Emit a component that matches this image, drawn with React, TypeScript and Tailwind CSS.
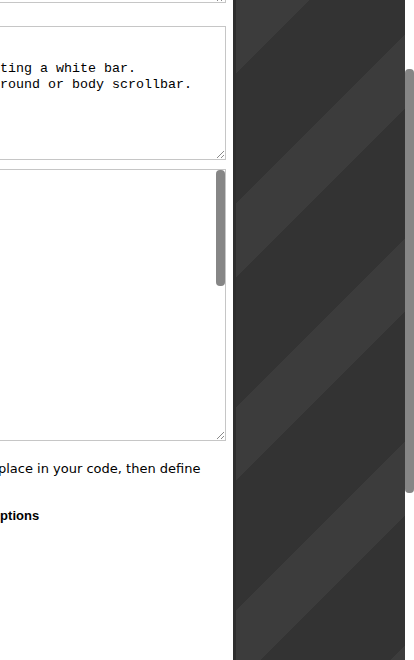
import React from 'react';

function ResizeGrip() {
  return (
    <svg width="8" height="8" viewBox="0 0 8 8" className="block">
      <path d="M1 8 L8 1" stroke="#8a8a8a" strokeWidth="1" />
      <path d="M5 8 L8 5" stroke="#8a8a8a" strokeWidth="1" />
    </svg>
  );
}

const codeLines = [
  '/* Why?',
  '',
  'body from creating a white bar.',
  'the html background or body scrollbar.',
];

export default function App() {
  return (
    <div className="flex w-[414px] h-[660px] overflow-hidden bg-white">
      {/* left column, scrolled sideways */}
      <div className="w-[233px] shrink-0 overflow-hidden text-black">
        <div className="-ml-[115px] w-[341px] -mt-[40px]">
          {/* textarea 1 (mostly scrolled out) */}
          <div className="h-[43px] border border-[#c6c6c6] flex items-end justify-end pr-[1px] pb-[1px]">
            <ResizeGrip />
          </div>

          {/* textarea 2 */}
          <div className="mt-[23px] h-[134px] border border-[#c6c6c6] flex flex-col">
            <div className="flex-1 pt-[2px] pl-[2px] font-['Liberation_Mono',monospace] text-[13.33px] leading-4 whitespace-pre">
              {codeLines.map((l, i) => (
                <div key={i} className="h-4">{l}</div>
              ))}
            </div>
            <div className="flex justify-end pr-[1px] pb-[1px]">
              <ResizeGrip />
            </div>
          </div>

          {/* textarea 3 */}
          <div className="mt-[9px] h-[272px] border border-[#c6c6c6] flex">
            <div className="flex-1" />
            <div className="w-[9px] flex flex-col justify-between">
              <div className="h-[116px] bg-[#868686] rounded-[4px]" />
              <div className="pb-[1px]">
                <ResizeGrip />
              </div>
            </div>
          </div>
        </div>

        <p className="mt-[20px] -ml-[2px] font-['DejaVu_Sans',sans-serif] text-[13px] leading-4 whitespace-nowrap">
          place in your code, then define
        </p>
        <h3 className="mt-[31px] -ml-[10px] font-['Liberation_Sans',Arial,sans-serif] text-[13px] leading-4 font-bold whitespace-nowrap">
          Options
        </h3>
      </div>

      {/* striped side panel */}
      <div className="w-[172px] shrink-0 flex h-full">
        <div className="w-[3px] bg-[#2e2e2e]" />
        <div className="flex-1 bg-[repeating-linear-gradient(135deg,#3c3c3c_0px,#3c3c3c_52px,#333333_52px,#333333_144px)]" />
      </div>

      {/* page scrollbar */}
      <div className="w-[9px] shrink-0 bg-white flex flex-col">
        <div className="mt-[69px] h-[424px] bg-[#868686] rounded-[4px]" />
      </div>
    </div>
  );
}
